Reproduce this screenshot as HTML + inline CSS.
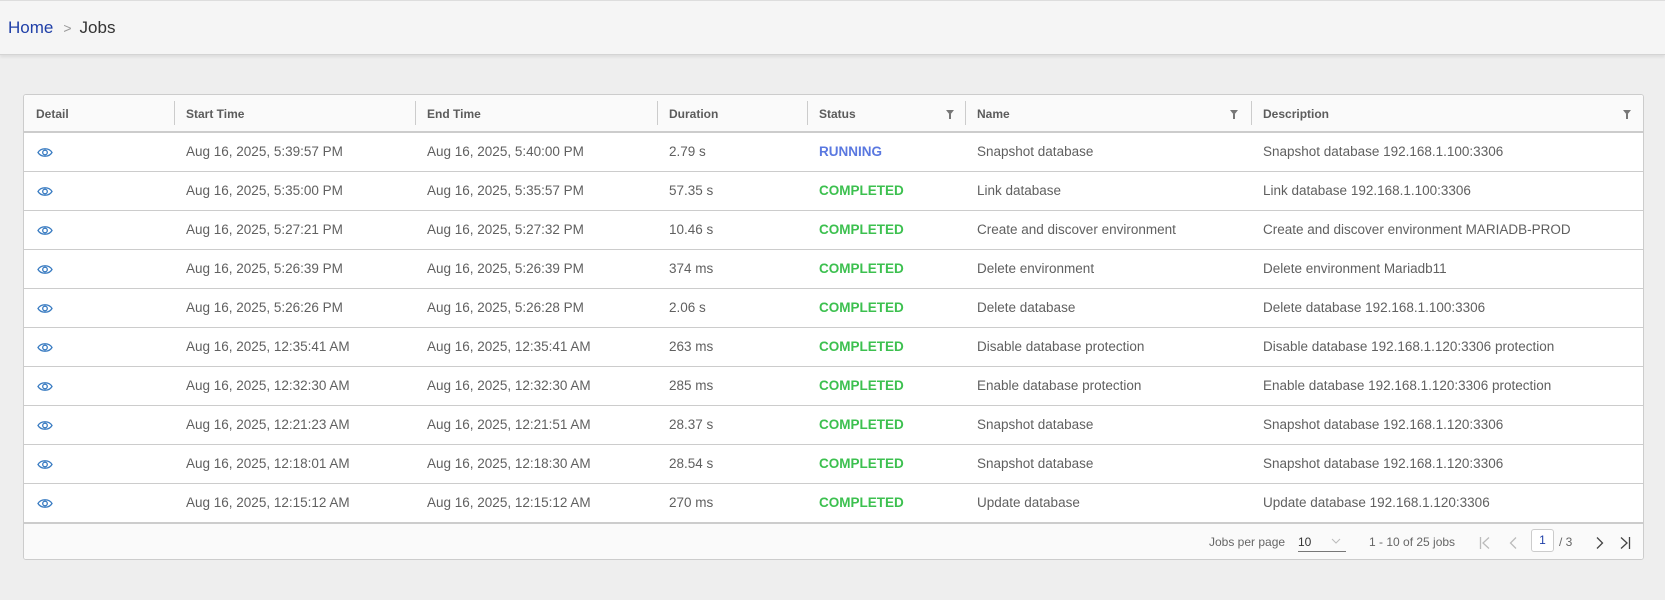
<!DOCTYPE html>
<html><head><style>
*{margin:0;padding:0;box-sizing:border-box}
body{width:1665px;height:600px;background:#eeeeee;font-family:"Liberation Sans",sans-serif;color:#565656;position:relative;overflow:hidden}
.bar{position:absolute;left:0;top:0;width:1665px;height:55px;background:#f5f5f5;border-top:1px solid #ddd;border-bottom:1px solid #d4d4d4;box-shadow:0 2px 3px rgba(0,0,0,.08)}
.bc{position:absolute;left:8px;top:17px;font-size:17px;color:#333}
.bc .h{color:#1f3fa8}.bc .s{color:#999;font-size:14px;margin:0 8px 0 10px}
.tbl{position:absolute;left:23px;top:94px;width:1621px;height:466px;background:#fff;border:1px solid #ccc;border-radius:3px;overflow:hidden}
.hd{position:absolute;left:0;top:0;width:100%;height:38px;background:#fafafa;border-bottom:2px solid #ccc}
.hd span{position:absolute;top:12px;font-size:12px;font-weight:bold;color:#5c5c5c}
.sep{position:absolute;top:6px;width:1px;height:24px;background:#ccc}
.f{position:absolute;top:15px;width:0;height:0;border-left:4px solid transparent;border-right:4px solid transparent;border-top:5px solid #777}
.f:after{content:"";position:absolute;left:-1px;top:-1px;width:2px;height:5px;background:#777}
.row{position:absolute;left:0;width:100%;height:39px;border-bottom:1px solid #ccc;font-size:13.5px;color:#606060}
.row span{position:absolute;top:11px;white-space:nowrap}
.run{color:#5a78e0;font-weight:bold}.ok{color:#3cc04f;font-weight:bold}
.ft{position:absolute;left:0;top:428px;width:100%;height:38px;background:#fafafa;border-top:1px solid #ccc;font-size:12px;color:#666}
.ft span{position:absolute;top:11px}
</style></head><body>
<div class="bar"><div class="bc"><span class="h">Home</span><span class="s">&gt;</span>Jobs</div></div>
<div class="tbl">
<div class="hd">
<span style="left:12px">Detail</span>
<div class="sep" style="left:150px"></div><span style="left:162px">Start Time</span>
<div class="sep" style="left:391px"></div><span style="left:403px">End Time</span>
<div class="sep" style="left:633px"></div><span style="left:645px">Duration</span>
<div class="sep" style="left:783px"></div><span style="left:795px">Status</span><div class="f" style="left:922px"></div>
<div class="sep" style="left:941px"></div><span style="left:953px">Name</span><div class="f" style="left:1206px"></div>
<div class="sep" style="left:1227px"></div><span style="left:1239px">Description</span><div class="f" style="left:1599px"></div>
</div>
<div id="rows"></div>
<div class="ft">
<span style="left:1185px">Jobs per page</span>
<span style="left:1274px;color:#333">10</span>
<svg style="position:absolute;left:1307px;top:14px" width="10" height="7"><path d="M1 1L5 5L9 1" stroke="#bbb" fill="none"/></svg>
<div style="position:absolute;left:1274px;top:27px;width:48px;height:1px;background:#777"></div>
<span style="left:1345px">1 - 10 of 25 jobs</span>
<svg style="position:absolute;left:1455px;top:12px" width="12" height="14"><path d="M1.5 1V13M10 1.5L4 7L10 12.5" stroke="#bbb" fill="none" stroke-width="1.3"/></svg>
<svg style="position:absolute;left:1484px;top:12px" width="10" height="14"><path d="M8 1.5L2.5 7L8 12.5" stroke="#bbb" fill="none" stroke-width="1.3"/></svg>
<div style="position:absolute;left:1507px;top:5px;width:23px;height:23px;border:1px solid #ccc;border-radius:3px;background:#fff;font-size:12px;color:#1f3fa8;text-align:center;line-height:21px">1</div>
<span style="left:1535px">/ 3</span>
<svg style="position:absolute;left:1571px;top:12px" width="10" height="14"><path d="M2 1.5L7.5 7L2 12.5" stroke="#444" fill="none" stroke-width="1.3"/></svg>
<svg style="position:absolute;left:1595px;top:12px" width="12" height="14"><path d="M10.5 1V13M2 1.5L8 7L2 12.5" stroke="#444" fill="none" stroke-width="1.3"/></svg>
</div>
</div>
<script>
var d=[["Aug 16, 2025, 5:39:57 PM","Aug 16, 2025, 5:40:00 PM","2.79 s","RUNNING","Snapshot database","Snapshot database 192.168.1.100:3306"],
["Aug 16, 2025, 5:35:00 PM","Aug 16, 2025, 5:35:57 PM","57.35 s","COMPLETED","Link database","Link database 192.168.1.100:3306"],
["Aug 16, 2025, 5:27:21 PM","Aug 16, 2025, 5:27:32 PM","10.46 s","COMPLETED","Create and discover environment","Create and discover environment MARIADB-PROD"],
["Aug 16, 2025, 5:26:39 PM","Aug 16, 2025, 5:26:39 PM","374 ms","COMPLETED","Delete environment","Delete environment Mariadb11"],
["Aug 16, 2025, 5:26:26 PM","Aug 16, 2025, 5:26:28 PM","2.06 s","COMPLETED","Delete database","Delete database 192.168.1.100:3306"],
["Aug 16, 2025, 12:35:41 AM","Aug 16, 2025, 12:35:41 AM","263 ms","COMPLETED","Disable database protection","Disable database 192.168.1.120:3306 protection"],
["Aug 16, 2025, 12:32:30 AM","Aug 16, 2025, 12:32:30 AM","285 ms","COMPLETED","Enable database protection","Enable database 192.168.1.120:3306 protection"],
["Aug 16, 2025, 12:21:23 AM","Aug 16, 2025, 12:21:51 AM","28.37 s","COMPLETED","Snapshot database","Snapshot database 192.168.1.120:3306"],
["Aug 16, 2025, 12:18:01 AM","Aug 16, 2025, 12:18:30 AM","28.54 s","COMPLETED","Snapshot database","Snapshot database 192.168.1.120:3306"],
["Aug 16, 2025, 12:15:12 AM","Aug 16, 2025, 12:15:12 AM","270 ms","COMPLETED","Update database","Update database 192.168.1.120:3306"]];
var h="",x=[162,403,645,795,953,1239];
d.forEach(function(r,i){h+='<div class="row" style="top:'+(38+i*39)+'px"><svg style="position:absolute;left:13px;top:14px" width="16" height="11"><path d="M1 5.5C4 0.5 12 0.5 15 5.5C12 10.5 4 10.5 1 5.5Z" stroke="#3a7cc2" fill="none" stroke-width="1.3"/><circle cx="8" cy="5.5" r="2.3" stroke="#3a7cc2" fill="none" stroke-width="1.3"/></svg>';
r.forEach(function(c,j){h+='<span style="left:'+x[j]+'px"'+(j==3?' class="'+(c=="RUNNING"?"run":"ok")+'"':'')+'>'+c+'</span>'});h+='</div>'});
document.getElementById("rows").innerHTML=h;
</script>
</body></html>
